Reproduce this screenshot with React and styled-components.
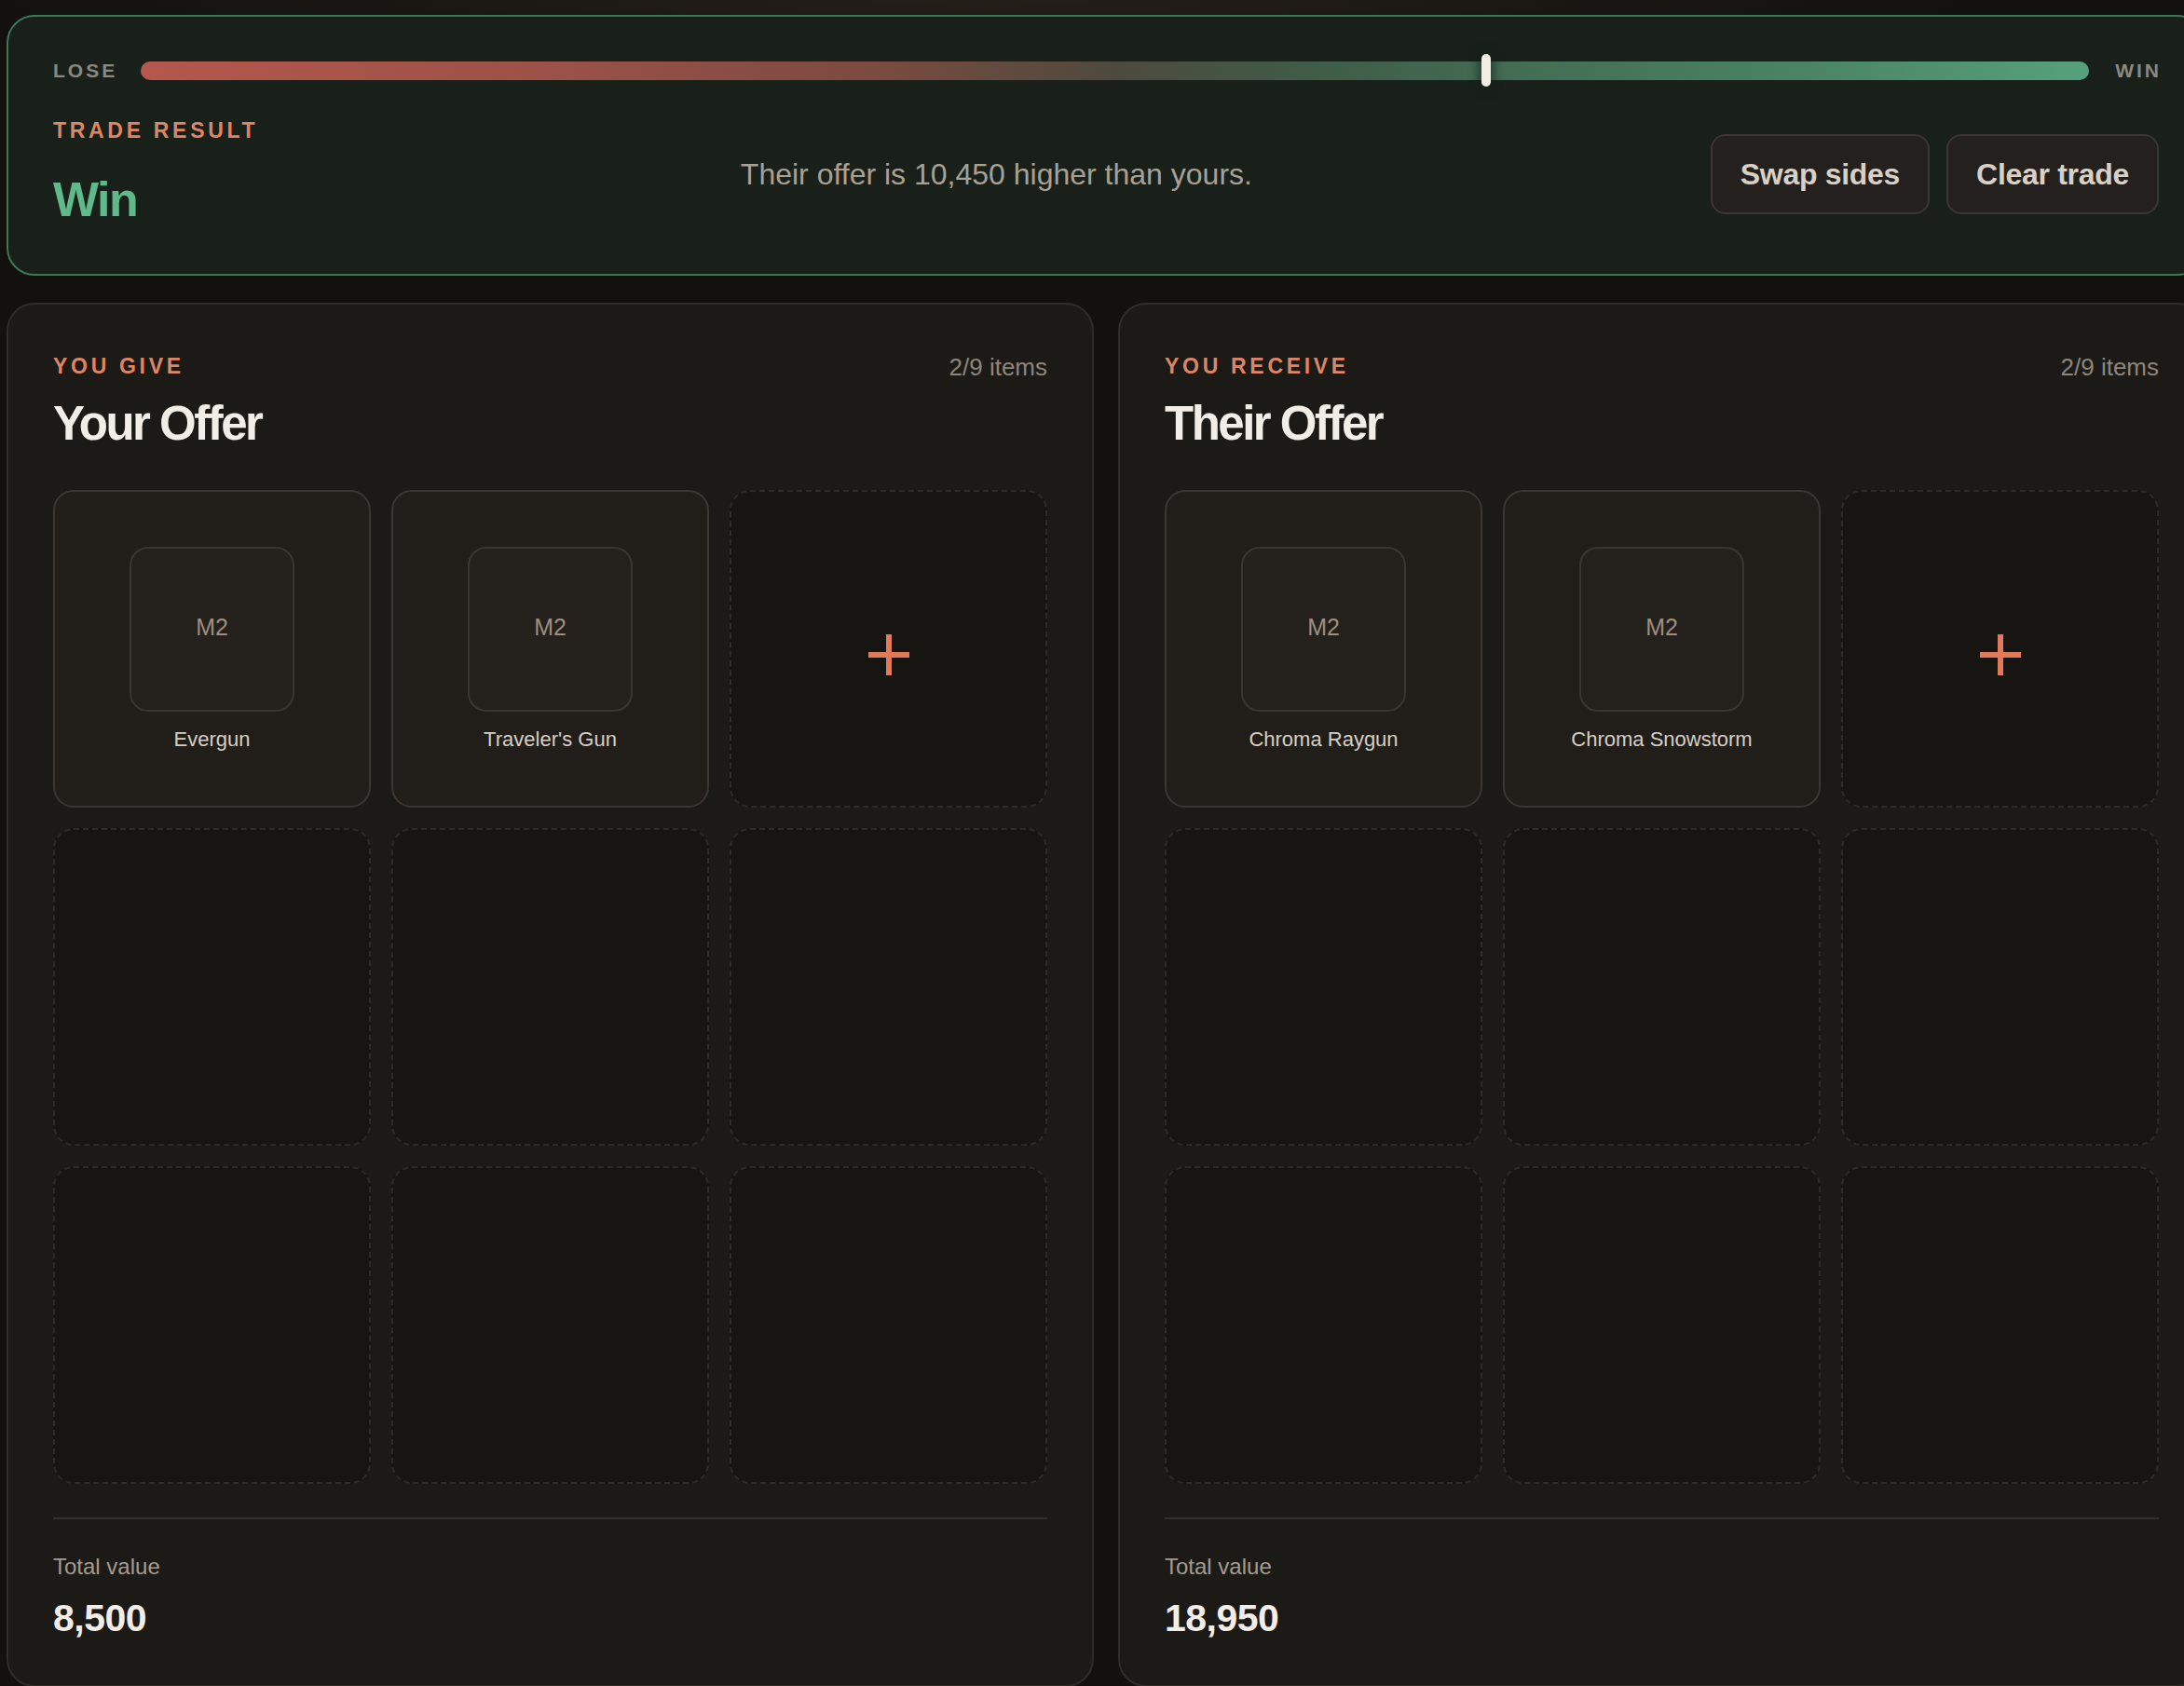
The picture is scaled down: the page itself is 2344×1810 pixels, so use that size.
import React from "react";
import styled, { createGlobalStyle } from "styled-components";

const GlobalStyle = createGlobalStyle`
  html, body {
    margin: 0;
    padding: 0;
    overflow: hidden;
    background: #12110e;
  }
  body {
    font-family: "Liberation Sans", Arial, Helvetica, sans-serif;
    color: #f2ede6;
    background:
      radial-gradient(ellipse 1100px 60px at 45% 0%, rgba(70, 55, 45, 0.35), transparent),
      #12110e;
  }
`;

const Page = styled.div`
  width: 2360px;
  padding: 16px 0 0 7px;
  display: flex;
  flex-direction: column;
  gap: 29px;
`;

const ResultPanel = styled.section`
  background: #182019;
  border: 2px solid #3e7658;
  border-radius: 30px;
  padding: 44px 48px 50px;
  display: flex;
  flex-direction: column;
  gap: 36px;
`;

const MeterRow = styled.div`
  display: flex;
  align-items: center;
  gap: 28px;
  height: 28px;
`;

const MeterLabel = styled.span`
  font-size: 21px;
  font-weight: 700;
  letter-spacing: 3px;
  margin-right: -3px;
  color: #8b8880;
  line-height: 28px;
`;

const Track = styled.div`
  position: relative;
  flex: 1;
  height: 20px;
  border-radius: 10px;
  background: linear-gradient(
    90deg,
    #b5574c 0%,
    #9a5147 22%,
    #7a4a40 38%,
    #4d4a3d 50%,
    #3f5c48 60%,
    #436f55 72%,
    #4b8565 86%,
    #55a17b 100%
  );
`;

const Thumb = styled.div`
  position: absolute;
  top: -8px;
  width: 10px;
  height: 35px;
  margin-left: -5px;
  border-radius: 5px;
  background: #f1ece4;
  box-shadow: 0 0 10px 4px rgba(18, 30, 24, 0.55);
`;

const ResultRow = styled.div`
  display: flex;
  align-items: center;
`;

const ResultInfo = styled.div`
  width: 250px;
  display: flex;
  flex-direction: column;
`;

const Eyebrow = styled.div`
  font-size: 23px;
  font-weight: 700;
  letter-spacing: 3.7px;
  line-height: 28px;
  color: #df8564;
  text-transform: uppercase;
`;

const Verdict = styled.div`
  margin-top: 30px;
  font-size: 52px;
  font-weight: 700;
  letter-spacing: -1.5px;
  line-height: 60px;
  color: #5fb98a;
`;

const Summary = styled.p`
  flex: 1;
  margin: 0;
  text-align: center;
  font-size: 32px;
  line-height: 40px;
  color: #a8a095;
  transform: translate(-2px, 2px);
`;

const Actions = styled.div`
  display: flex;
  gap: 18px;
  transform: translateY(2px);
`;

const ActionButton = styled.button`
  height: 86px;
  padding: 0 30px;
  border: 2px solid #3b3631;
  border-radius: 16px;
  background: #24201d;
  color: #d8d0c5;
  font-family: inherit;
  font-size: 32px;
  font-weight: 700;
  letter-spacing: -0.3px;
  cursor: pointer;
`;

const Sides = styled.div`
  display: flex;
  gap: 26px;
`;

const OfferPanel = styled.section`
  width: 1167px;
  box-sizing: border-box;
  background: #1c1a17;
  border: 2px solid #302d29;
  border-radius: 30px;
  padding: 52px 48px 48px;
  display: flex;
  flex-direction: column;
`;

const OfferHeader = styled.div`
  display: flex;
  justify-content: space-between;
  align-items: flex-start;
  margin-bottom: 41px;
`;

const OfferTitle = styled.h2`
  margin: 18px 0 0;
  font-size: 51px;
  font-weight: 700;
  letter-spacing: -2.5px;
  line-height: 60px;
  color: #f2ede6;
`;

const ItemCount = styled.span`
  font-size: 26px;
  line-height: 30px;
  color: #8c857b;
`;

const SlotGrid = styled.div`
  display: grid;
  grid-template-columns: repeat(3, 1fr);
  gap: 22px;
`;

const Slot = styled.div`
  aspect-ratio: 1;
  box-sizing: border-box;
  border-radius: 22px;
  display: flex;
  flex-direction: column;
  align-items: center;
  justify-content: center;
  gap: 17px;
  background: ${(p) => (p.$filled ? "#211e1a" : "#161512")};
  border: 2px ${(p) => (p.$filled ? "solid #3a3632" : "dashed #2e2b27")};
  cursor: ${(p) => (p.$add ? "pointer" : "default")};
`;

const Thumbnail = styled.div`
  width: 177px;
  height: 177px;
  box-sizing: border-box;
  border: 2px solid #3a3531;
  border-radius: 20px;
  background: #24201c;
  display: flex;
  align-items: center;
  justify-content: center;
  font-size: 25px;
  color: #9e8e80;
  padding-bottom: 4px;
`;

const ItemName = styled.div`
  font-size: 22px;
  line-height: 26px;
  color: #d6cec4;
`;

const PlusIcon = styled.svg`
  width: 44px;
  height: 44px;
  margin-top: 12px;
`;

const Divider = styled.hr`
  margin: 36px 0 0;
  border: 0;
  height: 2px;
  background: #33302c;
`;

const TotalLabel = styled.div`
  margin-top: 37px;
  font-size: 24px;
  line-height: 28px;
  color: #a39b90;
`;

const TotalValue = styled.div`
  margin-top: 17px;
  font-size: 41px;
  font-weight: 700;
  letter-spacing: -0.5px;
  line-height: 48px;
  color: #f2ede6;
`;

const SLOTS = 9;

const offers = [
  {
    eyebrow: "You give",
    title: "Your Offer",
    items: ["Evergun", "Traveler's Gun"],
    total: 8500,
  },
  {
    eyebrow: "You receive",
    title: "Their Offer",
    items: ["Chroma Raygun", "Chroma Snowstorm"],
    total: 18950,
  },
];

const fmt = (n) => n.toLocaleString("en-US");

const Plus = () => (
  <PlusIcon viewBox="0 0 44 44">
    <path d="M22 0v44M0 22h44" stroke="#e07a58" strokeWidth="6" />
  </PlusIcon>
);

const Offer = ({ eyebrow, title, items, total }) => (
  <OfferPanel>
    <OfferHeader>
      <div>
        <Eyebrow>{eyebrow}</Eyebrow>
        <OfferTitle>{title}</OfferTitle>
      </div>
      <ItemCount>
        {items.length}/{SLOTS} items
      </ItemCount>
    </OfferHeader>
    <SlotGrid>
      {Array.from({ length: SLOTS }, (_, i) => {
        const item = items[i];
        if (item) {
          return (
            <Slot key={i} $filled>
              <Thumbnail>M2</Thumbnail>
              <ItemName>{item}</ItemName>
            </Slot>
          );
        }
        if (i === items.length) {
          return (
            <Slot key={i} $add>
              <Plus />
            </Slot>
          );
        }
        return <Slot key={i} />;
      })}
    </SlotGrid>
    <Divider />
    <TotalLabel>Total value</TotalLabel>
    <TotalValue>{fmt(total)}</TotalValue>
  </OfferPanel>
);

const App = () => {
  const [mine, theirs] = offers;
  const diff = theirs.total - mine.total;
  const position = (theirs.total / (mine.total + theirs.total)) * 100;

  return (
    <>
      <GlobalStyle />
      <Page>
        <ResultPanel>
          <MeterRow>
            <MeterLabel>LOSE</MeterLabel>
            <Track>
              <Thumb style={{ left: `${position}%` }} />
            </Track>
            <MeterLabel>WIN</MeterLabel>
          </MeterRow>
          <ResultRow>
            <ResultInfo>
              <Eyebrow>Trade result</Eyebrow>
              <Verdict>{diff >= 0 ? "Win" : "Lose"}</Verdict>
            </ResultInfo>
            <Summary>
              Their offer is {fmt(Math.abs(diff))} higher than yours.
            </Summary>
            <Actions>
              <ActionButton>Swap sides</ActionButton>
              <ActionButton>Clear trade</ActionButton>
            </Actions>
          </ResultRow>
        </ResultPanel>
        <Sides>
          {offers.map((o) => (
            <Offer key={o.title} {...o} />
          ))}
        </Sides>
      </Page>
    </>
  );
};

export default App;
